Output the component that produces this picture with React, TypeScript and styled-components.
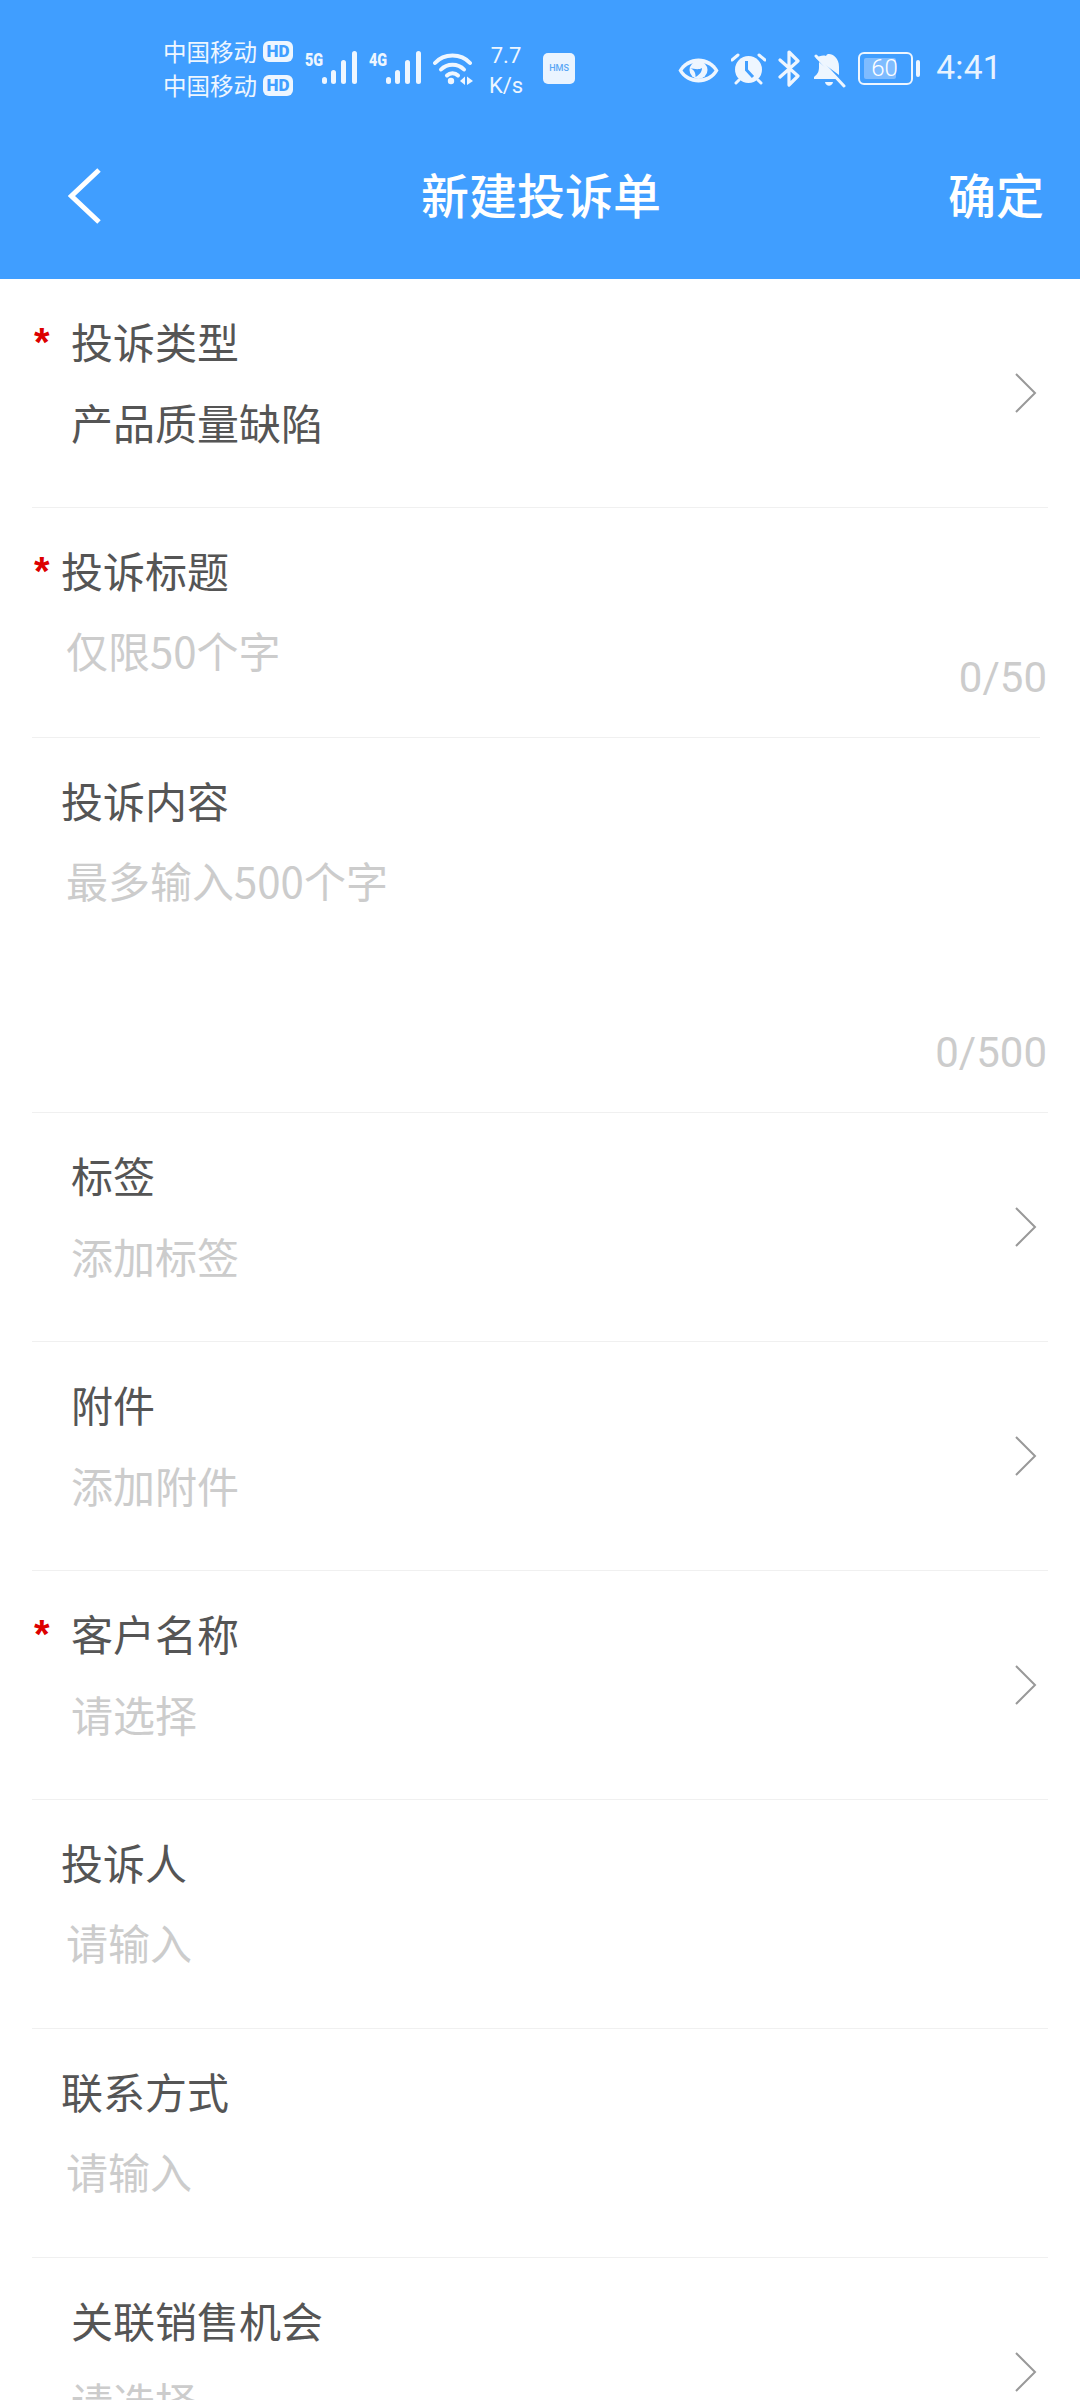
import React from "react";
import styled, { createGlobalStyle } from "styled-components";

const Global = createGlobalStyle`
  html, body { margin: 0; padding: 0; background: #fff; }
  body { font-family: "Noto Sans CJK SC", "Noto Sans", sans-serif; }
  #root { height: 2400px; overflow: hidden; }
`;

const Page = styled.div`
  width: 1080px;
  height: 2400px;
  overflow: hidden;
  background: #fff;
`;

const Header = styled.header`
  height: 279px;
  background: #409eff;
  color: #fff;
`;

const StatusBar = styled.div`
  height: 132px;
  box-sizing: border-box;
  padding: 36px 78px 0 163px;
  display: flex;
  justify-content: space-between;
  align-items: flex-start;
`;

const StatusGroup = styled.div`
  display: flex;
  align-items: flex-start;
  gap: 12px;
`;

const CarrierColumn = styled.div`
  display: flex;
  flex-direction: column;
  gap: 3px;
`;

const CarrierLine = styled.div`
  display: flex;
  align-items: center;
  gap: 6px;
  height: 31px;
  font-size: 23.5px;
  line-height: 31px;
  color: #eef6ff;
`;

const HdBadge = styled.span`
  width: 30px;
  height: 21px;
  border-radius: 6px;
  background: #eef6ff;
  color: #409eff;
  font-family: "Roboto", sans-serif;
  font-weight: 900;
  font-size: 17px;
  line-height: 21px;
  text-align: center;
`;

const Signal = styled.div`
  display: flex;
  align-items: flex-start;
  padding-top: 15px;
`;

const NetLabel = styled.span`
  width: 17px;
  font-family: "Roboto", sans-serif;
  font-weight: 900;
  font-size: 18px;
  line-height: 17px;
  color: #eef6ff;
  transform: scaleX(0.8);
  transform-origin: left center;
  white-space: nowrap;
`;

const IconSlot = styled.div<{ $top: number; $ml?: number }>`
  display: flex;
  padding-top: ${(p) => p.$top}px;
  margin-left: ${(p) => p.$ml ?? 0}px;
`;

const Speed = styled.div`
  width: 38px;
  margin-left: 2px;
  padding-top: 5px;
  font-family: "Roboto", sans-serif;
  font-weight: 400;
  font-size: 22px;
  line-height: 30px;
  text-align: center;
  color: #eef6ff;
`;

const HmsBadge = styled.div`
  width: 32px;
  height: 31px;
  margin: 17px 0 0 6px;
  border-radius: 5px;
  background: #eaf4ff;
  color: #5aa7f5;
  font-family: "Roboto", sans-serif;
  font-weight: 500;
  font-size: 9px;
  line-height: 31px;
  text-align: center;
`;

const Battery = styled.div`
  display: flex;
  align-items: center;
  gap: 3px;
  padding-top: 16px;
  margin-right: 4px;
`;

const BatteryBody = styled.div`
  width: 55px;
  height: 33px;
  box-sizing: border-box;
  border: 2.5px solid #eef6ff;
  border-radius: 6px;
  padding: 4px;
  display: flex;
`;

const BatteryFill = styled.div`
  width: 32px;
  height: 100%;
  border-radius: 2px;
  background: #7fbcff;
  overflow: visible;
  white-space: nowrap;
  font-family: "Roboto", sans-serif;
  font-weight: 300;
  font-size: 24px;
  line-height: 20px;
  color: #fff;
  text-indent: 7px;
`;

const BatteryNub = styled.div`
  width: 4px;
  height: 17px;
  border-radius: 2px;
  background: #eef6ff;
`;

const Clock = styled.div`
  padding-top: 12px;
  font-family: "Roboto", sans-serif;
  font-weight: 400;
  font-size: 33.5px;
  line-height: 40px;
  letter-spacing: 0.3px;
  color: #e8f3ff;
`;

const NavBar = styled.nav`
  display: flex;
  align-items: flex-start;
  justify-content: space-between;
  padding: 26px 36px 0 68px;
`;

const BackButton = styled.div`
  width: 34px;
  height: 56px;
  margin-top: 10px;
`;

const NavTitle = styled.h1`
  margin: 0 0 0 32px;
  font-size: 48px;
  font-weight: 500;
  line-height: 70px;
  color: #fff;
`;

const NavAction = styled.div`
  font-size: 48px;
  font-weight: 500;
  line-height: 70px;
  color: #fff;
`;

const Form = styled.main`
  padding: 0 32px;
`;

const Row = styled.section<{ $height: number; $divider?: number }>`
  position: relative;
  height: ${(p) => p.$height}px;
  box-sizing: border-box;
  padding-top: 32px;
  display: flex;
  align-items: center;
  justify-content: space-between;
  &::after {
    content: "";
    position: absolute;
    left: 0;
    right: ${(p) => p.$divider ?? 0}px;
    bottom: 0;
    height: 1px;
    background: #f0f0f0;
  }
`;

const RowBody = styled.div<{ $indent: number }>`
  align-self: stretch;
  flex: 1;
  display: flex;
  flex-direction: column;
  padding-left: ${(p) => p.$indent}px;
`;

const Label = styled.div`
  font-size: 42px;
  line-height: 60px;
  color: #555555;
`;

const Value = styled.div<{ $muted?: boolean }>`
  margin-top: 21px;
  font-size: 42px;
  line-height: 60px;
  color: ${(p) => (p.$muted ? "#cccccc" : "#555555")};
`;

const Placeholder = styled(Value).attrs({ $muted: true })`
  margin-left: 5px;
  margin-top: 20px;
`;

const Star = styled.span`
  position: absolute;
  left: 2px;
  top: 40px;
  font-family: "Liberation Sans", sans-serif;
  font-weight: 700;
  font-size: 40px;
  line-height: 46px;
  color: #dd0000;
`;

const Counter = styled.div`
  position: absolute;
  right: 1px;
  bottom: 35px;
  font-family: "Roboto", "Noto Sans", sans-serif;
  font-size: 42px;
  line-height: 50px;
  color: #cccccc;
`;

const Chevron = styled.svg`
  flex: none;
  width: 23px;
  height: 42px;
  margin: 0 11px 34px 0;
`;

const ChevronIcon = () => (
  <Chevron viewBox="0 0 23 42" fill="none" stroke="#999999" strokeWidth="2">
    <path d="M2 2 L21 21 L2 40" />
  </Chevron>
);

const Bars = () => (
  <svg width="35" height="33" viewBox="0 0 35 33" fill="#eef6ff">
    <rect x="0" y="26" width="5" height="7" rx="2.5" />
    <rect x="9" y="19" width="5" height="14" rx="2.5" />
    <rect x="19" y="9" width="5" height="24" rx="2.5" />
    <rect x="30" y="0" width="5" height="33" rx="2.5" />
  </svg>
);

const WifiIcon = () => (
  <svg width="40" height="33" viewBox="0 0 40 33" fill="none" stroke="#eef6ff" strokeLinecap="round" strokeWidth="4">
    <path d="M2 11 C11 1 28 1 37 11" />
    <path d="M8 17.5 C14 11 25 11 31 17.5" />
    <path d="M14 23.5 C17 20.5 22 20.5 25 23.5" />
    <circle cx="18" cy="29" r="3.2" fill="#eef6ff" stroke="none" />
    <path d="M27 29 L32 24.5 V33 Z" fill="#eef6ff" stroke="none" />
    <path d="M34 24.5 L40 29 L34 33 Z" fill="#eef6ff" stroke="none" />
  </svg>
);

const EyeIcon = () => (
  <svg width="41" height="25" viewBox="0 0 41 25">
    <path d="M0.5 12.5 C9 -3.5 32 -3.5 40.5 12.5 C32 28.5 9 28.5 0.5 12.5 Z" fill="#eef6ff" />
    <path d="M4.5 12.5 C11 2 30 2 36.5 12.5 C30 23 11 23 4.5 12.5 Z" fill="#409eff" />
    <circle cx="20.5" cy="12" r="9" fill="#eef6ff" />
    <path d="M12 10 C15 11 18 14 17.5 19 C20 17.5 24 15 24 10 C21 12 16 11 12 10 Z" fill="#409eff" />
  </svg>
);

const AlarmIcon = () => (
  <svg width="35" height="32" viewBox="0 0 35 32">
    <circle cx="17.5" cy="16.5" r="13.5" fill="#eef6ff" />
    <path d="M1 7 L7 2 M34 7 L28 2 M5 30 L8 27 M30 30 L27 27" stroke="#eef6ff" strokeWidth="3" strokeLinecap="round" />
    <path d="M15.5 8 V17 L22 24" fill="none" stroke="#409eff" strokeWidth="3" />
  </svg>
);

const BluetoothIcon = () => (
  <svg width="22" height="37" viewBox="0 0 22 37" fill="none" stroke="#eef6ff" strokeWidth="3.2" strokeLinejoin="round" strokeLinecap="round">
    <path d="M2 10 L20 26 L11 35 V2 L20 11 L2 27" />
  </svg>
);

const BellOffIcon = () => (
  <svg width="33" height="34" viewBox="0 0 33 34">
    <path d="M16 0 C20 0 26 4 26 13 V21 L3 4 L3 4 C6 2 10 1 13 2 C14 0 15 0 16 0 Z" fill="#eef6ff" />
    <path d="M6 8 L26 25 H1 V23 C5 20 6 17 6 13 Z" fill="#eef6ff" />
    <path d="M12 28 H20 C19 33 13 33 12 28 Z" fill="#eef6ff" />
    <path d="M3 2 L31 32" stroke="#eef6ff" strokeWidth="3" strokeLinecap="round" />
  </svg>
);

const BackIcon = () => (
  <svg width="34" height="56" viewBox="0 0 34 56" fill="none" stroke="#ffffff" strokeWidth="5">
    <path d="M31 2 L3.5 28 L31 54" />
  </svg>
);

type Field = {
  label: string;
  value?: string;
  hint: string;
  required?: boolean;
  arrow?: boolean;
  counter?: string;
  height: number;
  divider?: number;
};

const fields: Field[] = [
  { label: "投诉类型", value: "产品质量缺陷", hint: "", required: true, arrow: true, height: 229 },
  { label: "投诉标题", hint: "仅限50个字", required: true, counter: "0/50", height: 230, divider: 8 },
  { label: "投诉内容", hint: "最多输入500个字", counter: "0/500", height: 375 },
  { label: "标签", hint: "添加标签", arrow: true, height: 229 },
  { label: "附件", hint: "添加附件", arrow: true, height: 229 },
  { label: "客户名称", hint: "请选择", required: true, arrow: true, height: 229 },
  { label: "投诉人", hint: "请输入", height: 229 },
  { label: "联系方式", hint: "请输入", height: 229 },
  { label: "关联销售机会", hint: "请选择", arrow: true, height: 229 },
];

export default function App() {
  return (
    <Page>
      <Global />
      <Header>
        <StatusBar>
          <StatusGroup>
            <CarrierColumn>
              <CarrierLine>
                中国移动<HdBadge>HD</HdBadge>
              </CarrierLine>
              <CarrierLine>
                中国移动<HdBadge>HD</HdBadge>
              </CarrierLine>
            </CarrierColumn>
            <Signal>
              <NetLabel>5G</NetLabel>
              <Bars />
            </Signal>
            <Signal>
              <NetLabel>4G</NetLabel>
              <Bars />
            </Signal>
            <IconSlot $top={16}>
              <WifiIcon />
            </IconSlot>
            <Speed>
              7.7
              <br />
              K/s
            </Speed>
            <HmsBadge>HMS</HmsBadge>
          </StatusGroup>
          <StatusGroup>
            <IconSlot $top={22}>
              <EyeIcon />
            </IconSlot>
            <IconSlot $top={17}>
              <AlarmIcon />
            </IconSlot>
            <IconSlot $top={14}>
              <BluetoothIcon />
            </IconSlot>
            <IconSlot $top={18} $ml={1}>
              <BellOffIcon />
            </IconSlot>
            <Battery>
              <BatteryBody>
                <BatteryFill>60</BatteryFill>
              </BatteryBody>
              <BatteryNub />
            </Battery>
            <Clock>4:41</Clock>
          </StatusGroup>
        </StatusBar>
        <NavBar>
          <BackButton>
            <BackIcon />
          </BackButton>
          <NavTitle>新建投诉单</NavTitle>
          <NavAction>确定</NavAction>
        </NavBar>
      </Header>
      <Form>
        {fields.map((f) => (
          <Row key={f.label} $height={f.height} $divider={f.divider}>
            {f.required && <Star>*</Star>}
            <RowBody $indent={f.arrow ? 39 : 29}>
              <Label>{f.label}</Label>
              {f.value ? (
                <Value>{f.value}</Value>
              ) : f.arrow ? (
                <Value $muted>{f.hint}</Value>
              ) : (
                <Placeholder>{f.hint}</Placeholder>
              )}
            </RowBody>
            {f.arrow && <ChevronIcon />}
            {f.counter && <Counter>{f.counter}</Counter>}
          </Row>
        ))}
      </Form>
    </Page>
  );
}
